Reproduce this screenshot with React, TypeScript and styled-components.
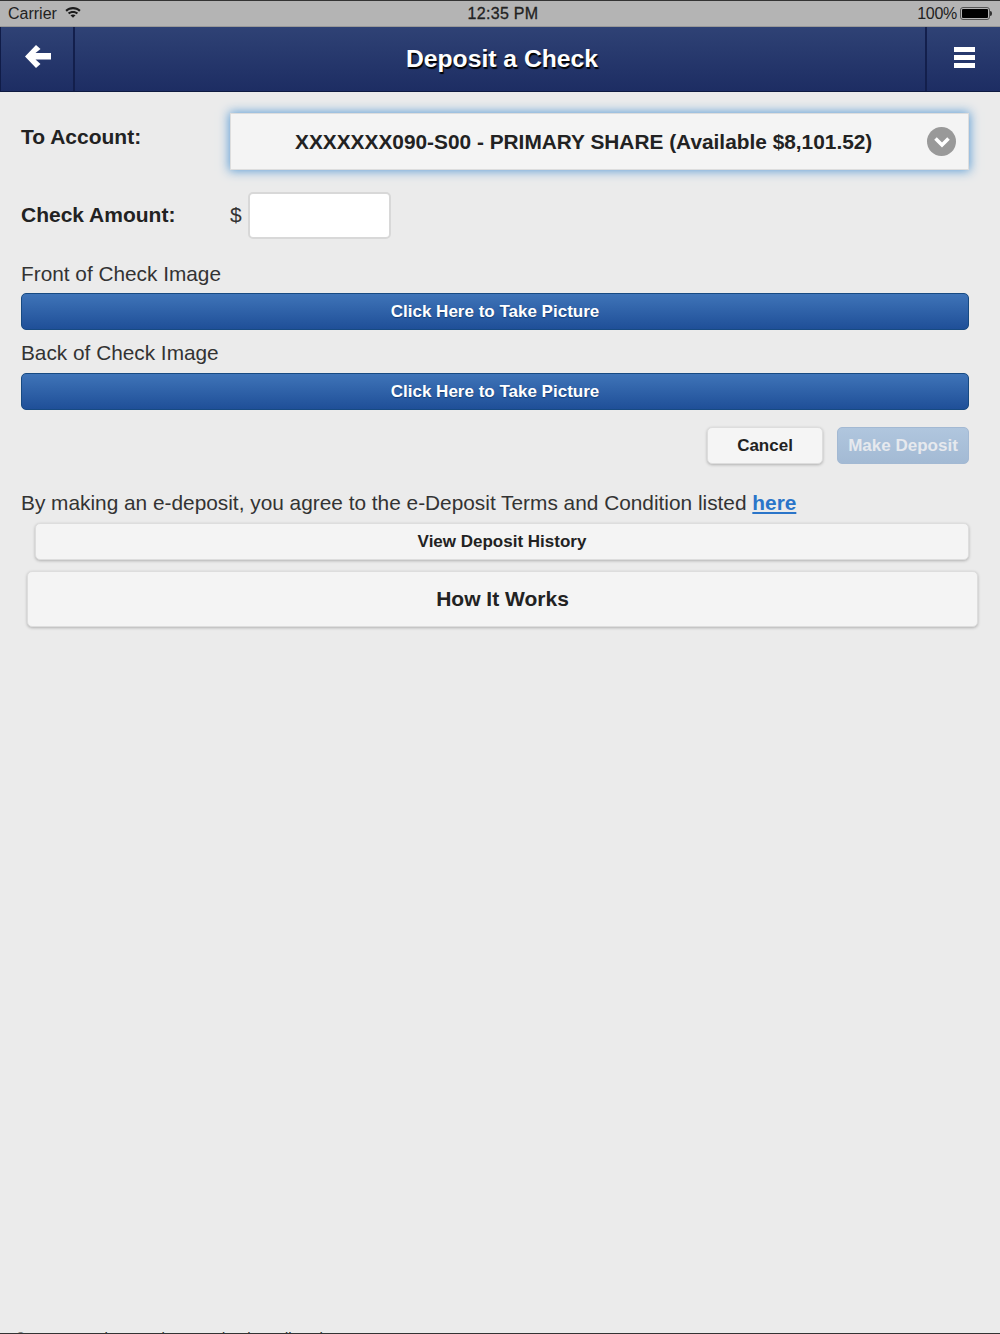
import React from 'react';
import styled, {createGlobalStyle} from 'styled-components';

const GlobalStyle = createGlobalStyle`
  html, body {
    margin: 0;
    padding: 0;
    background: #ebebeb;
  }
  body {
    font-family: "Liberation Sans", Arial, sans-serif;
    color: #222;
  }
`;

const App = () => {
    return (
        <Page>
            <GlobalStyle/>
            <StatusBar>
                <StatusLeft>
                    Carrier
                    <svg width="16" height="12" viewBox="0 0 17 12">
                        <path d="M0.4 4 C5 -0.4 12 -0.4 16.6 4 L15 5.7 C11.3 2.3 5.7 2.3 2 5.7 Z" fill="#1c1c1c"/>
                        <path d="M3.1 6.8 C6 4.2 11 4.2 13.9 6.8 L12.4 8.4 C10.2 6.5 6.8 6.5 4.6 8.4 Z" fill="#1c1c1c"/>
                        <path d="M5.8 9.5 C7.3 8.4 9.7 8.4 11.2 9.5 L8.5 12 Z" fill="#1c1c1c"/>
                    </svg>
                </StatusLeft>
                <StatusTime>12:35 PM</StatusTime>
                <StatusRight>
                    100%
                    <Battery><BatteryFill/></Battery>
                    <BatteryCap/>
                </StatusRight>
            </StatusBar>
            <Header>
                <HeaderButton>
                    <BackIcon width="26" height="23" viewBox="0 0 26 23">
                        <path d="M0 11.5 L11 0 L15.5 4 L10.5 8 L26 8 L26 14.5 L10.5 14.5 L15.5 19 L11 23 Z" fill="#fff"/>
                    </BackIcon>
                </HeaderButton>
                <Title>Deposit a Check</Title>
                <MenuButton>
                    <MenuBar/>
                    <MenuBar/>
                    <MenuBar/>
                </MenuButton>
            </Header>
            <Main>
                <AccountRow>
                    <AccountLabel>To Account:</AccountLabel>
                    <Select>
                        <SelectText>XXXXXXX090-S00 - PRIMARY SHARE (Available $8,101.52)</SelectText>
                        <Chevron>
                            <svg width="18" height="12" viewBox="0 0 18 12">
                                <path d="M2.5 2.5 L9 9 L15.5 2.5" fill="none" stroke="#fff" strokeWidth="3.6"/>
                            </svg>
                        </Chevron>
                    </Select>
                </AccountRow>
                <AmountRow>
                    <BoldLabel>Check Amount:</BoldLabel>
                    <Dollar>$</Dollar>
                    <AmountInput type="text"/>
                </AmountRow>
                <FieldLabel>Front of Check Image</FieldLabel>
                <PrimaryButton>Click Here to Take Picture</PrimaryButton>
                <FieldLabel $second>Back of Check Image</FieldLabel>
                <PrimaryButton>Click Here to Take Picture</PrimaryButton>
                <Actions>
                    <CancelButton>Cancel</CancelButton>
                    <DepositButton>Make Deposit</DepositButton>
                </Actions>
                <Terms>
                    By making an e-deposit, you agree to the e-Deposit Terms and Condition listed <TermsLink href="#">here</TermsLink>
                </Terms>
                <HistoryButton>View Deposit History</HistoryButton>
                <WorksButton>How It Works</WorksButton>
            </Main>
            <Footer>
                <span>© 2017 American Heritage Federal Credit Union</span>
                <FooterPhone>215.969.4677</FooterPhone>
            </Footer>
        </Page>
    );
};

export default App;

const Page = styled.div`
  height: 1334px;
  box-sizing: border-box;
  display: flex;
  flex-direction: column;
  overflow: hidden;
  background: #ebebeb;
  border-top: 1px solid #333;
  border-bottom: 1px solid #333;
`;

const StatusBar = styled.div`
  height: 25px;
  flex: none;
  display: grid;
  grid-template-columns: 1fr auto 1fr;
  align-items: center;
  padding: 0 8px;
  background: #b4b4b4;
  border-bottom: 1px solid #999;
  font-size: 16px;
  color: #222;
`;

const StatusLeft = styled.div`
  display: flex;
  align-items: center;
  gap: 8px;
  svg {
    margin-top: -3px;
  }
`;

const StatusTime = styled.div`
  letter-spacing: 0.3px;
  -webkit-text-stroke: 0.3px #222;
  margin-left: 6px;
`;

const StatusRight = styled.div`
  display: flex;
  align-items: center;
  justify-content: flex-end;
  letter-spacing: -0.3px;
`;

const Battery = styled.div`
  width: 30px;
  height: 13px;
  box-sizing: border-box;
  margin-left: 3px;
  padding: 1px;
  border: 1px solid #555;
  border-radius: 3px;
`;

const BatteryFill = styled.div`
  height: 100%;
  background: #000;
  border-radius: 1px;
`;

const BatteryCap = styled.div`
  width: 2px;
  height: 5px;
  background: #333;
  border-radius: 0 2px 2px 0;
`;

const Header = styled.div`
  height: 65px;
  flex: none;
  box-sizing: border-box;
  display: flex;
  background: linear-gradient(#2f4275, #1d2d63);
  border-bottom: 1px solid #0e1a40;
  border-left: 1px solid #101c48;
`;

const HeaderButton = styled.div`
  width: 74px;
  flex: none;
  box-sizing: border-box;
  border-right: 2px solid #131f4c;
  padding: 17.5px 0 0 24px;
`;

const BackIcon = styled.svg`
  display: block;
`;

const Title = styled.div`
  flex: 1;
  text-align: center;
  font-size: 24.7px;
  font-weight: 700;
  line-height: 63px;
  color: #fff;
  text-shadow: 1px 2px 1px #000;
  padding-left: 4px;
`;

const MenuButton = styled.div`
  width: 75px;
  flex: none;
  box-sizing: border-box;
  border-left: 2px solid #131f4c;
  display: flex;
  flex-direction: column;
  gap: 3.5px;
  padding: 20px 0 0 27px;
`;

const MenuBar = styled.div`
  width: 21px;
  height: 4.5px;
  background: #fff;
`;

const Main = styled.div`
  flex: 1;
  padding: 21px 31px 0 21px;
  display: flex;
  flex-direction: column;
`;

const AccountRow = styled.div`
  display: flex;
  align-items: flex-start;
`;

const BoldLabel = styled.div`
  width: 209px;
  flex: none;
  font-size: 21px;
  font-weight: 700;
  color: #222;
  padding-bottom: 2px;
`;

const AccountLabel = styled(BoldLabel)`
  padding-top: 12px;
`;

const Select = styled.div`
  flex: 1;
  height: 57px;
  box-sizing: border-box;
  display: flex;
  align-items: center;
  justify-content: space-between;
  padding: 0 12px 0 64px;
  background: #f4f4f4;
  border: 1px solid #ddd;
  box-shadow: 0 0 10px 1px #5e9ed6;
`;

const SelectText = styled.div`
  font-size: 20.85px;
  font-weight: 700;
  color: #222;
  white-space: nowrap;
`;

const Chevron = styled.div`
  width: 29px;
  height: 29px;
  flex: none;
  display: flex;
  align-items: center;
  justify-content: center;
  border-radius: 50%;
  background: #999;
`;

const AmountRow = styled.div`
  display: flex;
  align-items: center;
  margin-top: 22px;
`;

const Dollar = styled.div`
  width: 18px;
  flex: none;
  font-size: 21px;
  color: #333;
  padding-bottom: 2px;
`;

const AmountInput = styled.input`
  width: 143px;
  height: 47px;
  box-sizing: border-box;
  background: #fff;
  border: 2px solid #d8d8d8;
  border-radius: 5px;
  outline: none;
`;

const FieldLabel = styled.div<{$second?: boolean}>`
  margin-top: ${props => (props.$second ? '10.5px' : '22px')};
  margin-bottom: ${props => (props.$second ? '8px' : '7px')};
  font-size: 20.8px;
  line-height: 25px;
  color: #333;
`;

const PrimaryButton = styled.div`
  height: 36.5px;
  box-sizing: border-box;
  display: flex;
  align-items: center;
  justify-content: center;
  padding-top: 1px;
  font-size: 17px;
  font-weight: 700;
  color: #fff;
  background: linear-gradient(#3f74b8, #1f4f98);
  border: 1px solid #174a82;
  border-radius: 5px;
  text-shadow: 0 1px 1px #123a70;
`;

const Actions = styled.div`
  display: flex;
  justify-content: flex-end;
  gap: 14px;
  margin-top: 17.5px;
`;

const CancelButton = styled.div`
  width: 116px;
  height: 36.5px;
  box-sizing: border-box;
  display: flex;
  align-items: center;
  justify-content: center;
  padding-top: 1px;
  font-size: 17px;
  font-weight: 700;
  color: #222;
  background: #f5f5f5;
  border: 1px solid #ddd;
  border-radius: 5px;
  box-shadow: 0 1px 3px rgba(0, 0, 0, 0.25);
`;

const DepositButton = styled.div`
  width: 132px;
  height: 36.5px;
  box-sizing: border-box;
  display: flex;
  align-items: center;
  justify-content: center;
  padding-top: 1px;
  font-size: 17px;
  font-weight: 700;
  color: #e6e9ee;
  background: linear-gradient(#b0c6de, #a3bad4);
  border: 1px solid #a3b9d3;
  border-radius: 5px;
`;

const Terms = styled.div`
  margin-top: 26.5px;
  font-size: 20.83px;
  line-height: 26px;
  color: #333;
  white-space: nowrap;
`;

const TermsLink = styled.a`
  font-weight: 700;
  color: #2a75c9;
`;

const HistoryButton = styled.div`
  margin: 7px 0 0 14px;
  height: 37px;
  box-sizing: border-box;
  display: flex;
  align-items: center;
  justify-content: center;
  font-size: 17px;
  font-weight: 700;
  color: #222;
  background: #f4f4f4;
  border: 1px solid #ddd;
  border-radius: 5px;
  box-shadow: 0 1px 3px rgba(0, 0, 0, 0.25);
`;

const WorksButton = styled.div`
  margin: 11px -9px 0 6px;
  height: 56px;
  box-sizing: border-box;
  display: flex;
  align-items: center;
  justify-content: center;
  font-size: 21px;
  font-weight: 700;
  color: #222;
  background: #f4f4f4;
  border: 1px solid #ddd;
  border-radius: 5px;
  box-shadow: 0 1px 3px rgba(0, 0, 0, 0.25);
`;

const Footer = styled.div`
  flex: none;
  height: 5px;
  display: flex;
  justify-content: space-between;
  padding: 0 15px;
  font-size: 15.3px;
  line-height: 19px;
  color: #333;
`;

const FooterPhone = styled.span`
  color: #2a75c9;
`;
